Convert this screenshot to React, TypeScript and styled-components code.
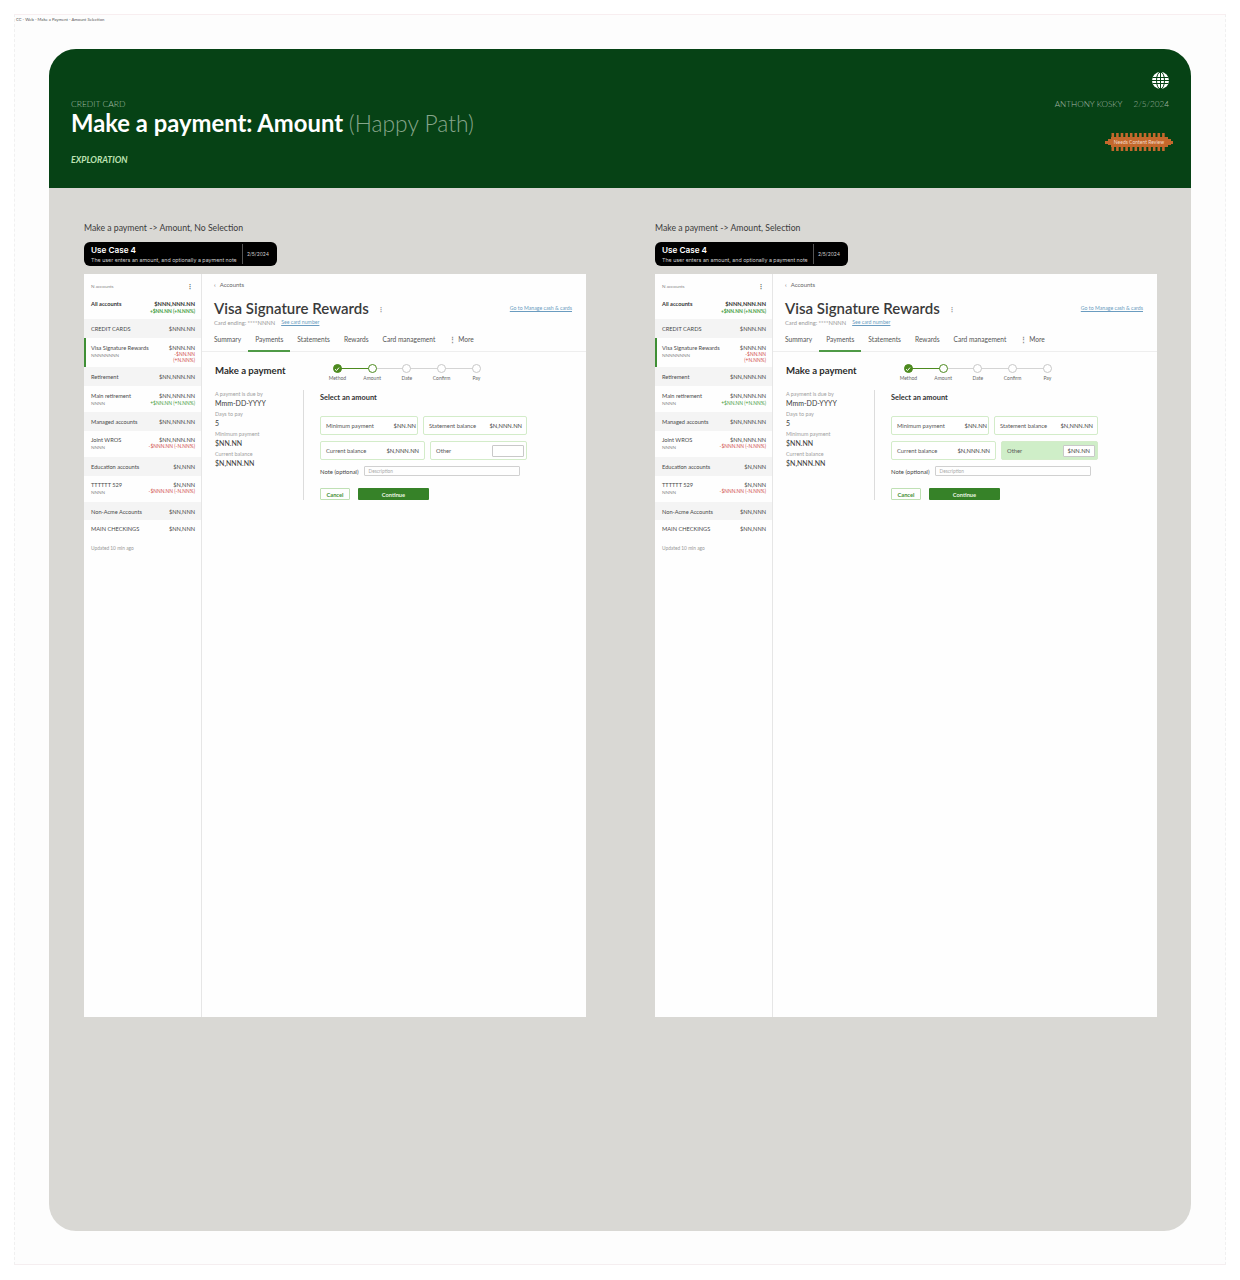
import React from 'react'
import styled, { createGlobalStyle } from 'styled-components'

const GlobalStyle = createGlobalStyle`
  html, body { margin: 0; padding: 0; background: #ffffff; }
  body { font-family: Lato, "Open Sans", sans-serif; color: #333; }
`

const Canvas = styled.div`
  width: 1212px;
  height: 1251px;
  margin: 14px 0 0 14px;
  box-sizing: border-box;
  padding: 2px 0 0 1px;
  background: #fdfdfd;
  border-top: 1px solid #f8eef0;
  border-bottom: 1px solid #f5eef0;
  border-left: 1px dashed #f0f0f0;
  border-right: 1px dashed #f0f0f0;
`
const FrameName = styled.div`
  height: 32px;
  font-size: 4.2px;
  line-height: 6px;
  color: #555;
`
const Board = styled.div`
  width: 1142px;
  height: 1182px;
  margin-left: 33px;
  border-radius: 27px;
  overflow: hidden;
  background: #d9d8d4;
`
const Banner = styled.header`
  height: 139px;
  box-sizing: border-box;
  background: #064215;
  padding: 50px 22px 0 22px;
  display: flex;
  justify-content: space-between;
`
const BannerLeft = styled.div`
  display: flex;
  flex-direction: column;
`
const Eyebrow = styled.div`
  font-size: 8.5px;
  line-height: 10px;
  font-weight: 300;
  color: #a8c0aa;
`
const BannerTitle = styled.h1`
  margin: 0;
  font-size: 23.8px;
  line-height: 28px;
  font-weight: 700;
  color: #ffffff;
  white-space: nowrap;
`
const TitleNote = styled.span`
  font-weight: 300;
  font-size: 22.8px;
  color: #86a58b;
`
const Exploration = styled.div`
  margin-top: 18px;
  font-size: 8.8px;
  line-height: 10px;
  font-weight: 700;
  font-style: italic;
  color: #bfe2b4;
`
const BannerRight = styled.div`
  margin-top: -27px;
  display: flex;
  flex-direction: column;
  align-items: flex-end;
`
const Globe = styled.svg`
  width: 17px;
  height: 17px;
  display: block;
`
const Byline = styled.div`
  margin-top: 10px;
  display: flex;
  gap: 11px;
  font-size: 8.2px;
  line-height: 10px;
  font-weight: 300;
  color: #a5b8a8;
`
const Stamp = styled.div`
  position: relative;
  margin: 24px -4px 0 0;
  width: 68px;
  height: 18px;
  display: flex;
  align-items: center;
  justify-content: center;
`
const StampShape = styled.svg`
  position: absolute;
  inset: 0;
  width: 68px;
  height: 18px;
`
const StampText = styled.span`
  position: relative;
  font-size: 5px;
  color: #f3dccb;
  white-space: nowrap;
`

const Columns = styled.div`
  display: flex;
  gap: 69px;
  padding: 34px 0 0 35px;
`
const Column = styled.section`
  width: 502px;
`
const Caption = styled.div`
  font-size: 8.7px;
  line-height: 11px;
  color: #3c3c3c;
`
const UseCase = styled.div`
  margin-top: 9px;
  width: 193px;
  height: 24px;
  box-sizing: border-box;
  display: flex;
  background: #000;
  color: #fff;
  border-radius: 6px;
`
const UseCaseBody = styled.div`
  width: 158px;
  box-sizing: border-box;
  padding: 3px 0 0 7px;
`
const UseCaseTitle = styled.div`
  font-family: Inter, sans-serif;
  font-size: 8.2px;
  line-height: 10px;
  font-weight: 600;
`
const UseCaseText = styled.div`
  margin-top: 2px;
  font-family: Inter, sans-serif;
  font-size: 5.3px;
  line-height: 7px;
  color: #d0d0d0;
  white-space: nowrap;
`
const UseCaseDate = styled.div`
  margin: 2px 0;
  flex: 1;
  border-left: 1px solid #555;
  padding-right: 4px;
  display: flex;
  align-items: center;
  justify-content: center;
  font-family: Inter, sans-serif;
  font-size: 5px;
  color: #ccc;
`

const Screen = styled.div`
  margin-top: 8px;
  height: 743px;
  display: flex;
  background: #fefefe;
`
const Sidebar = styled.aside`
  width: 118px;
  flex: none;
  box-sizing: border-box;
  border-right: 1px solid #e6e6e6;
  font-size: 5.65px;
  color: #4a4a4a;
`
const SideTop = styled.div`
  height: 45px;
  box-sizing: border-box;
  padding: 9px 6px 0 7px;
`
const SideCount = styled.div`
  display: flex;
  justify-content: space-between;
  align-items: center;
  font-size: 4.6px;
  line-height: 6px;
  color: #888;
`
const Kebab = styled.span`
  margin-right: 2px;
  font-size: 6px;
  font-weight: 900;
  color: #555;
`
const AllRow = styled.div`
  margin-top: 11px;
  display: flex;
  justify-content: space-between;
  font-weight: 700;
  line-height: 7px;
  color: #333;
`
const Band = styled.div<{ $h?: number }>`
  height: ${(p) => p.$h ?? 19}px;
  box-sizing: border-box;
  padding: 0 6px 0 7px;
  background: #f4f4f4;
  display: flex;
  justify-content: space-between;
  align-items: center;
`
const Item = styled.div<{ $active?: boolean; $h: number; $top?: number }>`
  height: ${(p) => p.$h}px;
  box-sizing: border-box;
  padding: ${(p) => p.$top ?? 6}px 6px 0 ${(p) => (p.$active ? 5 : 7)}px;
  border-left: ${(p) => (p.$active ? '2px solid #3f8f35' : 'none')};
  display: flex;
  justify-content: space-between;
  line-height: 6px;
`
const ItemSub = styled.div`
  margin-top: 1px;
  font-size: 4.6px;
  color: #8a8a8a;
`
const Amounts = styled.div`
  text-align: right;
  white-space: nowrap;
`
const Delta = styled.div<{ $tone: 'up' | 'down' }>`
  font-size: 4.9px;
  line-height: 5px;
  margin-top: ${(p) => (p.$tone === 'up' ? 2 : 1)}px;
  color: ${(p) => (p.$tone === 'up' ? '#3f9a3a' : '#d04a4a')};
`
const Updated = styled.div`
  padding: 6px 0 0 7px;
  font-size: 4.8px;
  line-height: 6px;
  color: #999;
`

const Main = styled.main`
  flex: 1;
  min-width: 0;
`
const Back = styled.div`
  padding: 3px 0 0 12px;
  height: 14px;
  display: flex;
  align-items: center;
  gap: 4px;
  font-size: 6px;
  color: #666;
`
const TitleRow = styled.div`
  margin-top: 7px;
  padding: 0 14px 0 12px;
  display: flex;
  align-items: center;
  height: 20px;
`
const AccountTitle = styled.h2`
  margin: 0;
  font-size: 15px;
  line-height: 20px;
  font-weight: 600;
  color: #3a3a3a;
  white-space: nowrap;
`
const Dots = styled.span`
  margin-left: 9px;
  font-size: 6px;
  font-weight: 900;
  color: #888;
`
const TextLink = styled.span<{ $size?: number }>`
  font-size: ${(p) => p.$size ?? 5.2}px;
  color: #6a9cc0;
  text-decoration: underline;
  white-space: nowrap;
`
const RightLink = styled(TextLink)`
  margin-left: auto;
`
const CardLine = styled.div`
  margin-top: 1px;
  padding-left: 12px;
  display: flex;
  gap: 6px;
  align-items: center;
  font-size: 5.8px;
  line-height: 7px;
  color: #999;
`
const Tabs = styled.nav`
  margin-top: 7px;
  height: 19px;
  box-sizing: border-box;
  padding-left: 5px;
  display: flex;
  border-bottom: 1px solid #eeeeee;
  font-size: 6.6px;
  color: #555;
`
const Tab = styled.div<{ $active?: boolean }>`
  padding: 2px 7px 0;
  height: 19px;
  box-sizing: border-box;
  border-bottom: 2px solid ${(p) => (p.$active ? '#4f9a47' : 'transparent')};
  white-space: nowrap;
`
const MoreDivider = styled.span`
  margin-right: 2px;
  color: #888;
  font-weight: 700;
`
const PayHead = styled.div`
  margin-top: 12px;
  padding-left: 13px;
  display: flex;
  align-items: flex-start;
`
const PayTitle = styled.h3`
  margin: 1px 0 0;
  width: 105px;
  font-size: 9.6px;
  line-height: 12px;
  font-weight: 700;
  color: #2c2c2c;
  white-space: nowrap;
`
const Stepper = styled.div`
  display: flex;
`
const Step = styled.div`
  position: relative;
  width: 34.75px;
  display: flex;
  flex-direction: column;
  align-items: center;
`
const Connector = styled.span<{ $done?: boolean }>`
  position: absolute;
  top: 3.75px;
  left: 50%;
  width: 34.75px;
  height: 1.5px;
  background: ${(p) => (p.$done ? '#4d8a1f' : '#d4d4d4')};
`
const Dot = styled.span<{ $state: 'done' | 'current' | 'todo' }>`
  position: relative;
  width: 9px;
  height: 9px;
  box-sizing: border-box;
  border-radius: 50%;
  background: ${(p) => (p.$state === 'done' ? '#4d8a1f' : '#fff')};
  border: 1.2px solid ${(p) => (p.$state === 'todo' ? '#c8c8c8' : '#4d8a1f')};
  display: flex;
  align-items: center;
  justify-content: center;
`
const StepLabel = styled.span`
  margin-top: 2px;
  font-size: 5px;
  line-height: 6px;
  color: #666;
`
const PayBody = styled.div`
  margin-top: 9px;
  padding-left: 13px;
  display: flex;
`
const Facts = styled.div`
  width: 89px;
  height: 110px;
  flex: none;
  box-sizing: border-box;
  border-right: 1px solid #dcdcdc;
`
const FactLabel = styled.div`
  margin-top: 1px;
  font-size: 5.4px;
  line-height: 7px;
  color: #a0a0a0;
`
const FactValue = styled.div`
  margin-bottom: 2px;
  font-size: 7px;
  line-height: 11px;
  color: #3a3a3a;
`
const AmountForm = styled.div`
  padding: 3px 0 0 16px;
  width: 208px;
  flex: none;
`
const FormTitle = styled.div`
  font-size: 7.4px;
  line-height: 9px;
  font-weight: 700;
  color: #333;
`
const OptionRow = styled.div`
  display: flex;
  gap: 5px;
  margin-top: 6px;
  &:nth-of-type(2) { margin-top: 14px; }
`
const Option = styled.div<{ $w: number; $pr: number; $selected?: boolean }>`
  width: ${(p) => p.$w}px;
  height: 19px;
  box-sizing: border-box;
  padding: 0 ${(p) => p.$pr}px 0 5px;
  border: 1px solid #d3ecc9;
  border-radius: 2px;
  background: ${(p) => (p.$selected ? '#cfeec8' : '#ffffff')};
  display: flex;
  justify-content: space-between;
  align-items: center;
  font-size: 5.8px;
  color: #555;
  white-space: nowrap;
`
const OptionValue = styled.span`
  color: #444;
`
const OtherInput = styled.div`
  width: 32px;
  height: 12px;
  box-sizing: border-box;
  padding-right: 4px;
  background: #fff;
  border: 1px solid #c9c9c9;
  border-radius: 1px;
  display: flex;
  align-items: center;
  justify-content: flex-end;
  color: #444;
`
const NoteRow = styled.div`
  margin-top: 6px;
  display: flex;
  align-items: center;
  gap: 5px;
  font-size: 5.9px;
  color: #444;
  white-space: nowrap;
`
const NoteInput = styled.div`
  width: 156px;
  height: 10px;
  box-sizing: border-box;
  padding-left: 4px;
  border: 1px solid #d0d0d0;
  border-radius: 1px;
  display: flex;
  align-items: center;
  font-size: 4.8px;
  color: #aaa;
`
const Actions = styled.div`
  margin-top: 12px;
  display: flex;
  gap: 8px;
`
const CancelButton = styled.div`
  width: 30px;
  height: 12px;
  box-sizing: border-box;
  border: 1px solid #bfe0b4;
  border-radius: 1px;
  display: flex;
  align-items: center;
  justify-content: center;
  font-size: 5.7px;
  font-weight: 700;
  color: #3f8f35;
`
const ContinueButton = styled.div`
  width: 71px;
  height: 12px;
  border-radius: 1px;
  background: #368228;
  display: flex;
  align-items: center;
  justify-content: center;
  font-size: 5.7px;
  font-weight: 700;
  color: #e8f5e4;
`

const steps = ['Method', 'Amount', 'Date', 'Confirm', 'Pay']

const stampPath = () => {
  // comb outline: teeth along top and bottom, stepped ends
  const pitch = 4.6
  let top = 'M6 4'
  let bottom = ''
  for (let i = 0; i < 12; i++) {
    const x = 6.5 + i * pitch
    top += ` H${x} V0 H${x + 2.6} V4`
    bottom = ` H${x + 2.6} V18 H${x} V14` + bottom
  }
  return `${top} H63 V6 H66 V8 H68 V11 H66 V12 H63 V14${bottom} H6 V12 H3 V11 H0 V8 H3 V6 H6 Z`
}

const ScreenMock: React.FC<{ selected?: boolean }> = ({ selected }) => (
  <Screen>
    <Sidebar>
      <SideTop>
        <SideCount>
          N accounts
          <Kebab>⋮</Kebab>
        </SideCount>
        <AllRow>
          All accounts
          <Amounts>
            $NNN,NNN.NN
            <Delta $tone="up">+$NN.NN (+N.NN%)</Delta>
          </Amounts>
        </AllRow>
      </SideTop>
      <Band>
        CREDIT CARDS
        <span>$NNN.NN</span>
      </Band>
      <Item $active $h={29} $top={7}>
        <div>
          Visa Signature Rewards
          <ItemSub>NNNNNNNN</ItemSub>
        </div>
        <Amounts>
          $NNN.NN
          <Delta $tone="down">-$NN.NN</Delta>
          <Delta $tone="down">(+N.NN%)</Delta>
        </Amounts>
      </Item>
      <Band>
        Retirement
        <span>$NN,NNN.NN</span>
      </Band>
      <Item $h={26} $top={7}>
        <div>
          Main retirement
          <ItemSub>NNNN</ItemSub>
        </div>
        <Amounts>
          $NN,NNN.NN
          <Delta $tone="up">+$NN.NN (+N.NN%)</Delta>
        </Amounts>
      </Item>
      <Band>
        Managed accounts
        <span>$NN,NNN.NN</span>
      </Band>
      <Item $h={26}>
        <div>
          Joint WROS
          <ItemSub>NNNN</ItemSub>
        </div>
        <Amounts>
          $NN,NNN.NN
          <Delta $tone="down">-$NNN.NN (-N.NN%)</Delta>
        </Amounts>
      </Item>
      <Band>
        Education accounts
        <span>$N,NNN</span>
      </Band>
      <Item $h={26}>
        <div>
          TTTTTT 529
          <ItemSub>NNNN</ItemSub>
        </div>
        <Amounts>
          $N,NNN
          <Delta $tone="down">-$NNN.NN (-N.NN%)</Delta>
        </Amounts>
      </Item>
      <Band $h={18}>
        Non-Acme Accounts
        <span>$NN,NNN</span>
      </Band>
      <Item $h={19}>
        MAIN CHECKINGS
        <span>$NN,NNN</span>
      </Item>
      <Updated>Updated 10 min ago</Updated>
    </Sidebar>
    <Main>
      <Back>
        <span>‹</span>
        Accounts
      </Back>
      <TitleRow>
        <AccountTitle>Visa Signature Rewards</AccountTitle>
        <Dots>⋮</Dots>
        <RightLink>Go to Manage cash &amp; cards</RightLink>
      </TitleRow>
      <CardLine>
        Card ending: ****NNNN
        <TextLink>See card number</TextLink>
      </CardLine>
      <Tabs>
        <Tab>Summary</Tab>
        <Tab $active>Payments</Tab>
        <Tab>Statements</Tab>
        <Tab>Rewards</Tab>
        <Tab>Card management</Tab>
        <Tab>
          <MoreDivider>⋮</MoreDivider>
          More
        </Tab>
      </Tabs>
      <PayHead>
        <PayTitle>Make a payment</PayTitle>
        <Stepper>
          {steps.map((label, i) => (
            <Step key={label}>
              {i < steps.length - 1 && <Connector $done={i === 0} />}
              <Dot $state={i === 0 ? 'done' : i === 1 ? 'current' : 'todo'}>
                {i === 0 && (
                  <svg width="6" height="6" viewBox="0 0 6 6">
                    <path d="M1 3.2 L2.5 4.6 L5 1.6" fill="none" stroke="#fff" strokeWidth="1" />
                  </svg>
                )}
              </Dot>
              <StepLabel>{label}</StepLabel>
            </Step>
          ))}
        </Stepper>
      </PayHead>
      <PayBody>
        <Facts>
          <FactLabel>A payment is due by</FactLabel>
          <FactValue>Mmm-DD-YYYY</FactValue>
          <FactLabel>Days to pay</FactLabel>
          <FactValue>5</FactValue>
          <FactLabel>Minimum payment</FactLabel>
          <FactValue>$NN.NN</FactValue>
          <FactLabel>Current balance</FactLabel>
          <FactValue>$N,NNN.NN</FactValue>
        </Facts>
        <AmountForm>
          <FormTitle>Select an amount</FormTitle>
          <OptionRow>
            <Option $w={98} $pr={1}>
              Minimum payment
              <OptionValue>$NN.NN</OptionValue>
            </Option>
            <Option $w={104} $pr={4}>
              Statement balance
              <OptionValue>$N,NNN.NN</OptionValue>
            </Option>
          </OptionRow>
          <OptionRow>
            <Option $w={105} $pr={5}>
              Current balance
              <OptionValue>$N,NNN.NN</OptionValue>
            </Option>
            <Option $w={97} $pr={2} $selected={selected}>
              Other
              <OtherInput>{selected ? '$NN.NN' : ''}</OtherInput>
            </Option>
          </OptionRow>
          <NoteRow>
            Note (optional)
            <NoteInput>Description</NoteInput>
          </NoteRow>
          <Actions>
            <CancelButton>Cancel</CancelButton>
            <ContinueButton>Continue</ContinueButton>
          </Actions>
        </AmountForm>
      </PayBody>
    </Main>
  </Screen>
)

const Scenario: React.FC<{ caption: string; selected?: boolean }> = ({ caption, selected }) => (
  <Column>
    <Caption>{caption}</Caption>
    <UseCase>
      <UseCaseBody>
        <UseCaseTitle>Use Case 4</UseCaseTitle>
        <UseCaseText>The user enters an amount, and optionally a payment note</UseCaseText>
      </UseCaseBody>
      <UseCaseDate>2/5/2024</UseCaseDate>
    </UseCase>
    <ScreenMock selected={selected} />
  </Column>
)

export default function App() {
  return (
    <>
      <GlobalStyle />
      <Canvas>
        <FrameName>CC - Web - Make a Payment - Amount Selection</FrameName>
        <Board>
          <Banner>
            <BannerLeft>
              <Eyebrow>CREDIT CARD</Eyebrow>
              <BannerTitle>
                Make a payment: Amount <TitleNote>(Happy Path)</TitleNote>
              </BannerTitle>
              <Exploration>EXPLORATION</Exploration>
            </BannerLeft>
            <BannerRight>
              <Globe viewBox="0 0 17 17">
                <circle cx="8.5" cy="8.5" r="8.5" fill="#fff" />
                <g fill="none" stroke="#064215" strokeWidth="1">
                  <ellipse cx="8.5" cy="8.5" rx="4" ry="8.5" />
                  <path d="M8.5 0 V17 M0.5 5.5 H16.5 M0 8.5 H17 M0.5 11.5 H16.5" />
                </g>
              </Globe>
              <Byline>
                <span>ANTHONY KOSKY</span>
                <span>2/5/2024</span>
              </Byline>
              <Stamp>
                <StampShape viewBox="0 0 68 18">
                  <path d={stampPath()} fill="#c4682c" />
                </StampShape>
                <StampText>Needs Content Review</StampText>
              </Stamp>
            </BannerRight>
          </Banner>
          <Columns>
            <Scenario caption="Make a payment -> Amount, No Selection" />
            <Scenario caption="Make a payment -> Amount, Selection" selected />
          </Columns>
        </Board>
      </Canvas>
    </>
  )
}
